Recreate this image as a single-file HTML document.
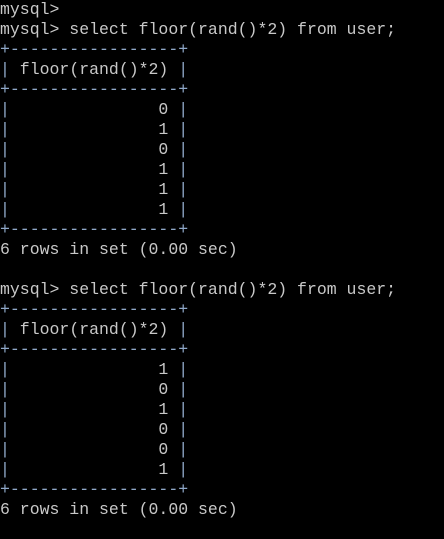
<!DOCTYPE html><html><head><style>
body{margin:0;background:#000;width:444px;height:539px;overflow:hidden}
pre{margin:0;position:absolute;top:0px;left:0;font-family:"Liberation Mono","DejaVu Sans Mono",monospace;font-size:16.5px;line-height:20px;color:#c8c8c8}
b{font-weight:normal;color:#8fa8c8}
</style></head><body><pre>mysql&gt;
mysql&gt; select floor(rand()*2) from user;
<b>+-----------------+</b>
<b>|</b> floor(rand()*2) <b>|</b>
<b>+-----------------+</b>
<b>|</b>               0 <b>|</b>
<b>|</b>               1 <b>|</b>
<b>|</b>               0 <b>|</b>
<b>|</b>               1 <b>|</b>
<b>|</b>               1 <b>|</b>
<b>|</b>               1 <b>|</b>
<b>+-----------------+</b>
6 rows in set (0.00 sec)

mysql&gt; select floor(rand()*2) from user;
<b>+-----------------+</b>
<b>|</b> floor(rand()*2) <b>|</b>
<b>+-----------------+</b>
<b>|</b>               1 <b>|</b>
<b>|</b>               0 <b>|</b>
<b>|</b>               1 <b>|</b>
<b>|</b>               0 <b>|</b>
<b>|</b>               0 <b>|</b>
<b>|</b>               1 <b>|</b>
<b>+-----------------+</b>
6 rows in set (0.00 sec)
</pre></body></html>
